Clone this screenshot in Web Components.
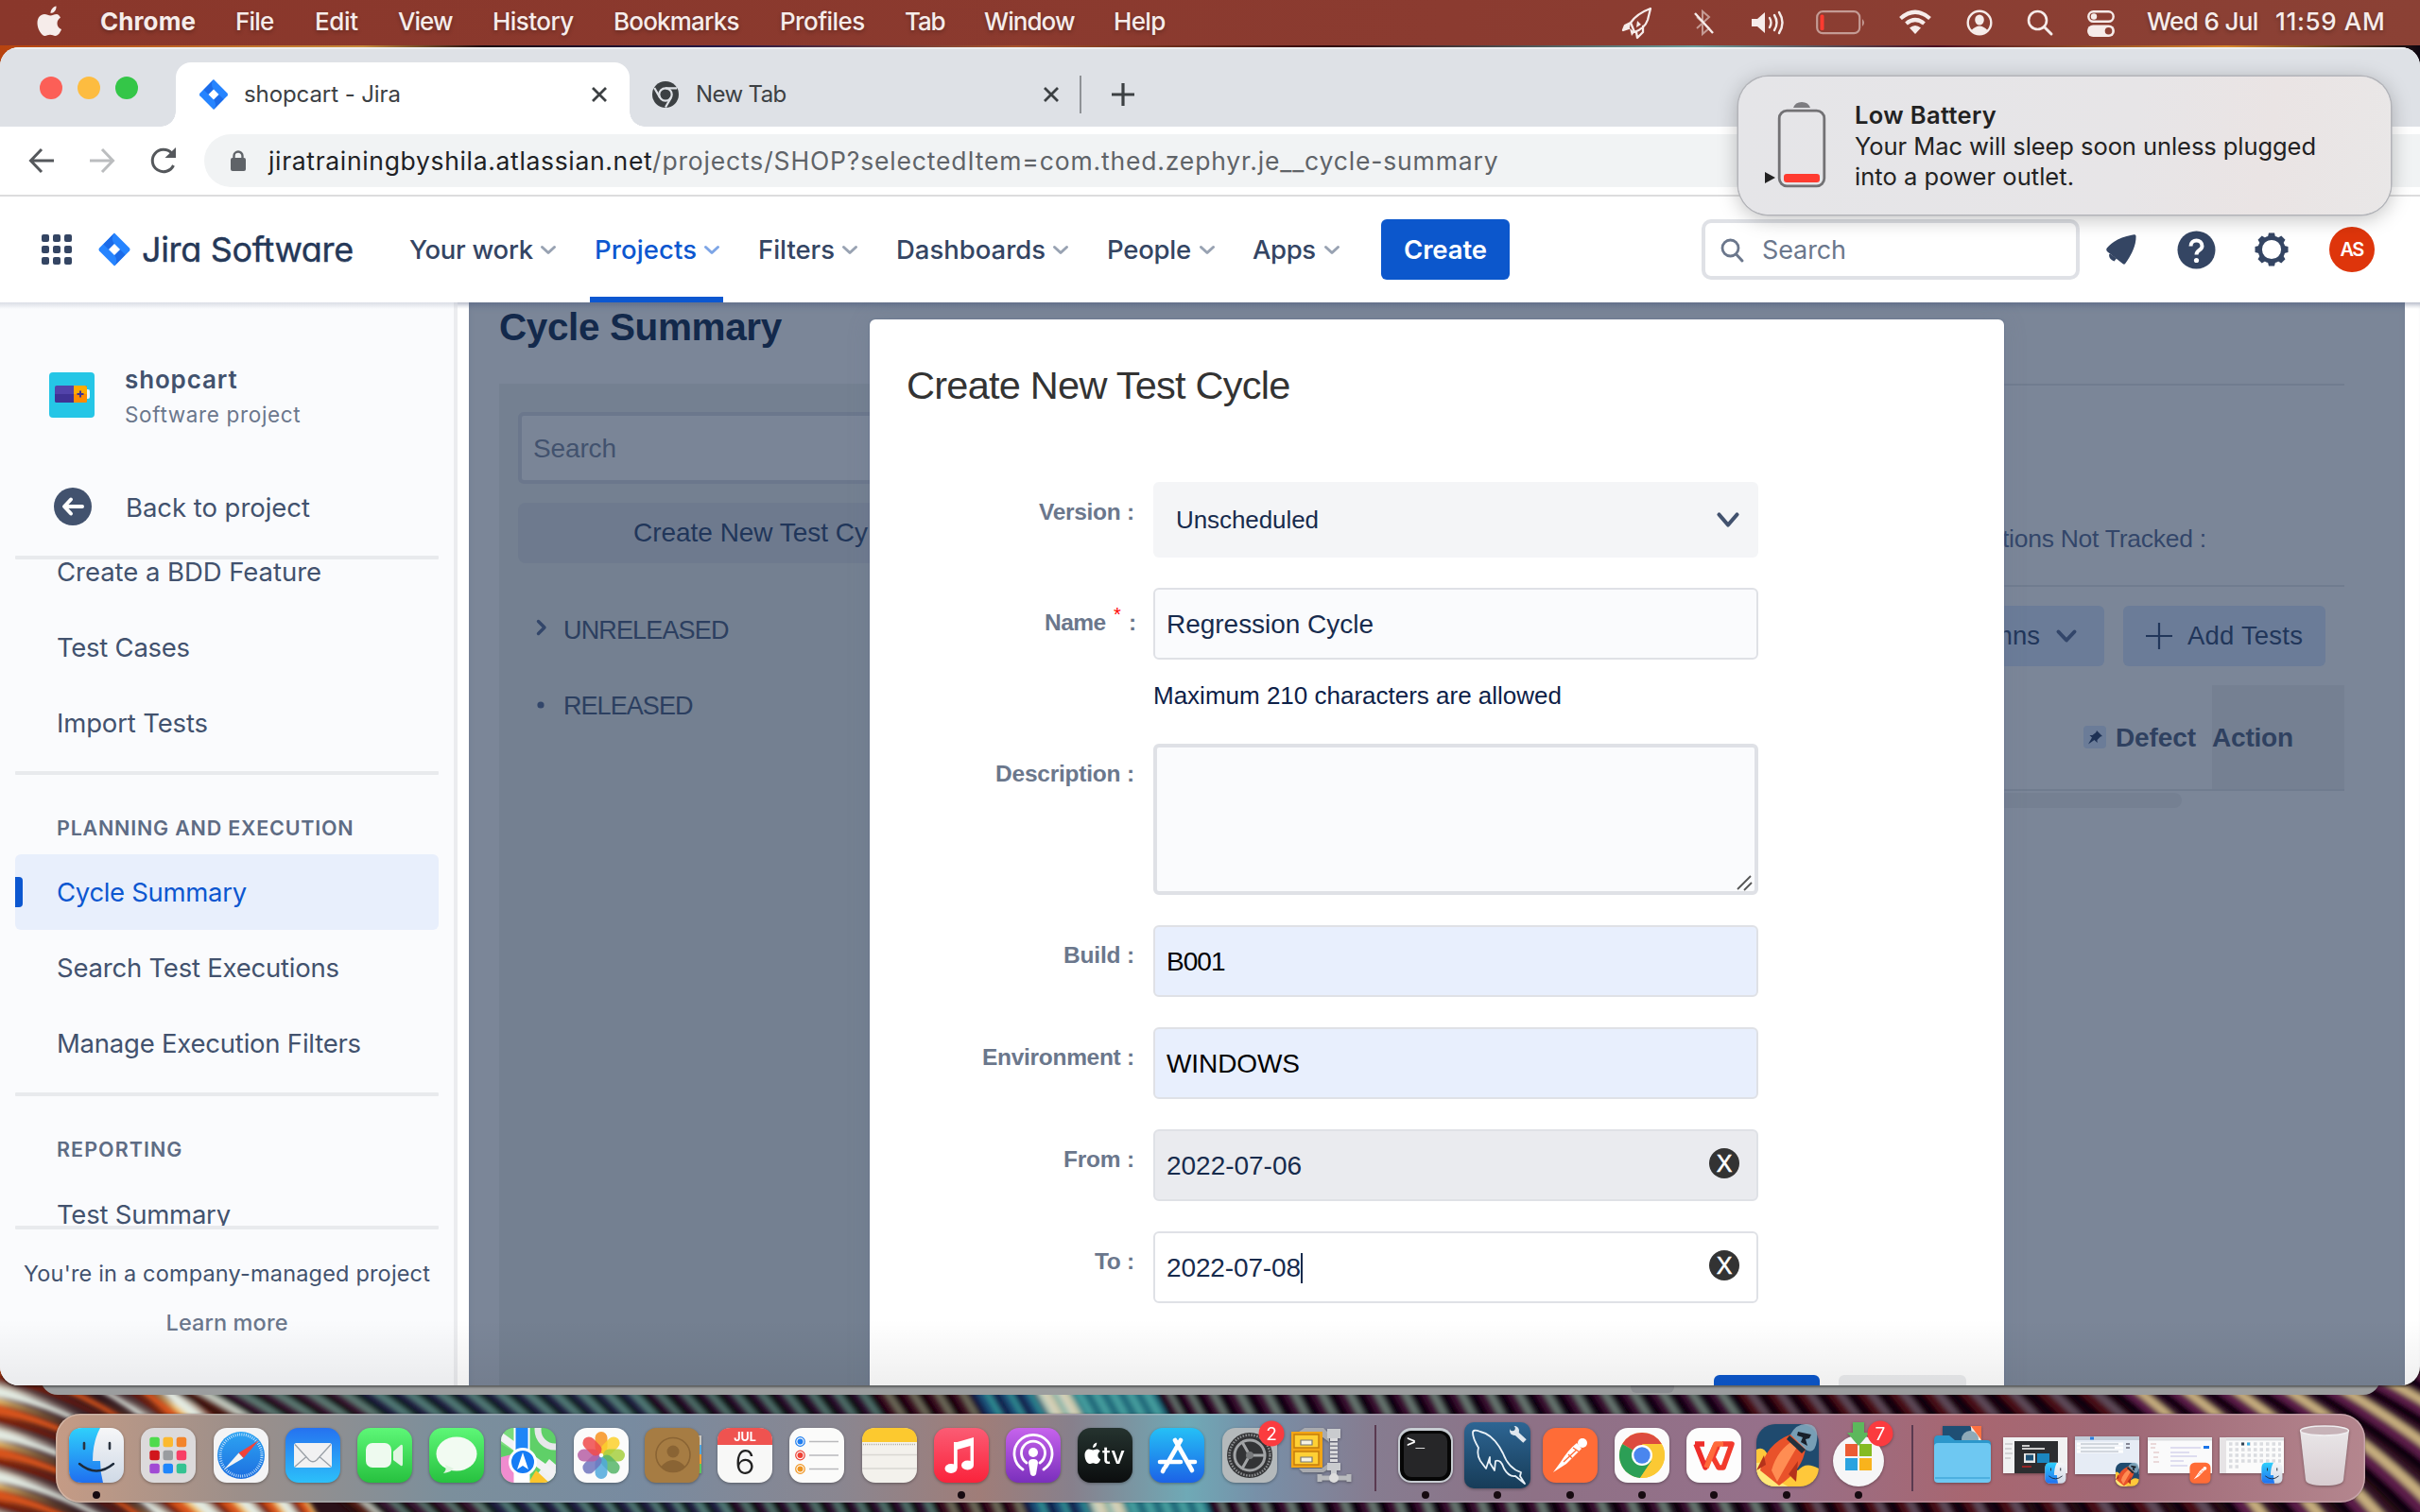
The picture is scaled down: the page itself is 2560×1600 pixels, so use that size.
<!DOCTYPE html>
<html lang="en">
<head>
<meta charset="utf-8">
<title>shopcart - Jira</title>
<style>
html,body{margin:0;width:2560px;height:1600px;overflow:hidden;background:#2a1420;font-family:Inter,"Liberation Sans",sans-serif;font-optical-sizing:none}
</style>
</head>
<body>
<mac-desktop></mac-desktop>
<script>
const fits=[];
const define=(name,css,html,after)=>customElements.define(name,class extends HTMLElement{
  constructor(){super();this.attachShadow({mode:'open'})}
  connectedCallback(){
    this.shadowRoot.innerHTML=`<style>*{box-sizing:border-box}svg{display:block;flex:none;overflow:visible}${css}</style>${typeof html==='function'?html(this):html}`;
    if(after)after(this);
  }
});

/* Text run that is tracked to a given width. */
customElements.define('fit-text',class extends HTMLElement{
  constructor(){super();this.attachShadow({mode:'open'}).innerHTML='<style>:host{display:block;white-space:pre;flex:none}span{display:inline-block}</style><span><slot></slot></span>';fits.push(this)}
  fit(){
    const w=+this.getAttribute('w'),s=this.shadowRoot.querySelector('span');
    const n=this.textContent.length;
    if(n>1)s.style.letterSpacing=((w-s.getBoundingClientRect().width)/(n-.5)).toFixed(3)+'px';
    this.style.width=w+'px';
  }
});
const T=(w,size,text,st='')=>`<fit-text w="${w}" style="font-size:${size}px;${st}">${text}</fit-text>`;
/* Lays items out in one flex line; each entry is [left, right, markup]. */
const line=(start,items)=>{let p=start;return items.map(([a,b,h])=>{const m=a-p;p=b;return `<div class="i" style="margin-left:${m}px;width:${b-a}px">${h}</div>`}).join('')};
const lineT=(a,b,size,text,st)=>[a,b,T(b-a,size,text,st)];
const S=(w,h,body,ex='')=>`<svg width="${w}" height="${h}" viewBox="0 0 ${w} ${h}" fill="none" ${ex}>${body}</svg>`;
const jiraMark=(w,h)=>`<svg width="${w}" height="${h}" viewBox="0 0 34 35"><path d="M17 0 33 16Q34 17.5 33 19L17 35 1 19Q0 17.5 1 16Z" fill="#2684ff"/><path d="M17 0Q12.500 6 17 11.500L11 17.500 5.500 12Z" fill="#1c6be8"/><path d="M17 35Q21.500 29 17 23.500L23 17.500 28.500 23Z" fill="#1c6be8"/><path d="M17 11.500 23 17.500 17 23.500 11 17.500Z" fill="#fff"/></svg>`;
const chev=(c,w=16,h=7,sw=3)=>S(w,h,`<path d="M1.500 0.500 ${w/2} ${h-.5} ${w-1.5} 0.500" stroke="${c}" stroke-width="${sw}" stroke-linecap="round" stroke-linejoin="round"/>`);

/* ---------- wallpaper ---------- */
define('desk-wallpaper',':host{display:block;width:2560px;height:1600px}',()=>{
  let out='';
  /* piecewise-linear lookup over x */
  const at=(pts,x)=>{for(let i=1;i<pts.length;i++)if(x<=pts[i][0]){const [a,u]=pts[i-1],[b,v]=pts[i];return u+(v-u)*Math.max(0,(x-a)/(b-a))}return pts[pts.length-1][1]};
  const period=[[100,42],[300,37],[600,28],[1000,27],[1100,18],[1200,18],[1280,29],[1900,31],[2200,46],[2500,64],[2600,66]];
  const slant=[[100,1.6],[300,1.25],[600,.85],[1000,.5],[1500,.45],[2000,.7],[2500,1.5]];
  const pal=x=>x<190?['#2b0f10','#5a2018','#c9cfc4','#93a096']
    :x<330?['#120a10','#3a1634','#5f7c74','#3f5a56']
    :x<640?['#0f1a1c','#221a44','#527c78','#3d625f']
    :x<880?['#0c070c','#2e1030','#50706a','#243634']
    :x<1000?['#140508','#3d0e20','#6d6a5a','#2a1a1c']
    :x<1080?['#101c48','#1f4f78','#2f8a90','#1a3560']
    :x<1115?['#a9c2b2','#d8d3bb','#c9c6a8','#6fa8a2']
    :x<1205?['#2b7f88','#4ba3a2','#2b8088','#1b4a6a']
    :x<1800?['#0e060c','#3a1032','#66766f','#1e1424']
    :x<2200?['#110308','#480c14','#5d4a58','#1c0510']
    :['#0e040a','#5b1f4a','#c6ae7e','#3a1530'];
  for(let y=1340;y<1660;y+=45){
    const b=(o,h,c)=>{const t=y+o;return `<path d="M-20 ${t}Q90 ${t+26} 190 ${t+105}T340 ${t+270}V${t+270+h*1.6}Q280 ${t+190+h*1.3} 190 ${t+105+h}T-20 ${t+h}Z" fill="${c}"/>`};
    out+=b(0,7,'#efc56a')+b(6,14,'#d9541a')+b(18,11,'#7c2411')+b(28,8,'#b9a898')+b(33,13,'#e3ebe2');
  }
  let x=150;
  while(x<2700){
    const w=at(period,x),d=150*at(slant,x),c=pal(x);
    let p=x;
    [.28,.3,.27,.15].forEach((f,k)=>{const q=w*f+1.5;
      out+=`<path d="M${p} 1455Q${p+d*.58} 1522 ${p+d} 1605h${q}Q${p+q+d*.58} 1522 ${p+q} 1455Z" fill="${c[k]}"/>`;p+=w*f});
    x+=w;
  }
  /* right-hand fan, above the dock's corner */
  return `<svg width="2560" height="1600"><defs><filter id="b" x="-5%" y="-5%" width="110%" height="110%"><feGaussianBlur stdDeviation="2.400"/></filter><linearGradient id="t"><stop offset="0" stop-color="#b8430f"/><stop offset=".15" stop-color="#c78a3a"/><stop offset=".2" stop-color="#1b0a10"/><stop offset=".3" stop-color="#241848"/><stop offset=".42" stop-color="#a8542c"/><stop offset=".55" stop-color="#30060a"/><stop offset=".7" stop-color="#6a9c9a"/><stop offset=".8" stop-color="#4a1022"/><stop offset=".92" stop-color="#d8862a"/><stop offset="1" stop-color="#0d0610"/></linearGradient></defs><rect width="2560" height="1600" fill="#2a1018"/><rect width="2560" height="90" fill="url(#t)"/><g filter="url(#b)">${out}</g></svg>`;
});

/* ---------- menu bar ---------- */
define('mac-menubar',`:host{display:flex;width:2560px;height:48px;background:linear-gradient(90deg,#8a372b,#8b3b30 60%,#8b4135);color:#f6ecea;align-items:center;text-shadow:0 2px 4px #0004}
.i{flex:none}.i svg{margin:auto}fit-text{margin-top:-3px}`,()=>line(0,[
 [38,68,S(30,34,'<path d="M22 9c-3 0-4.500 1.600-6.500 1.600S11.500 9 9 9C5 9 1.500 12.500 1.500 18.500S6 32 9.500 32c2 0 3-1.200 5.500-1.200S18.500 32 20.500 32c3 0 5.500-4 6.500-7-3-1.300-4.500-3.500-4.500-6.300 0-2.700 1.400-4.700 3.500-6C24.700 10.200 23.500 9 22 9ZM15.500 8c0-4 3-7 6-7.500C22 4.500 19 8 15.500 8Z" fill="#f6ecea"/>','style="margin-top:-3px"')],
 lineT(106,207,26,'Chrome','font-weight:700'),lineT(249,290,26,'File','font-weight:500'),lineT(333,379,26,'Edit','font-weight:500'),lineT(421,479,26,'View','font-weight:500'),lineT(521,607,26,'History','font-weight:500'),lineT(649,782,26,'Bookmarks','font-weight:500'),lineT(825,915,26,'Profiles','font-weight:500'),lineT(957,1000,26,'Tab','font-weight:500'),lineT(1041,1137,26,'Window','font-weight:500'),lineT(1178,1233,26,'Help','font-weight:500'),
 [1716,1748,S(32,32,'<path d="M30 1C22 4 13 10 9 16L13 26Q24 22 27 13ZM9 16 3 19 1 24 7 22M22 20l0 6-6 6-1-6" stroke="#f6ecea" stroke-width="2.300" stroke-linejoin="round" stroke-linecap="round"/><path d="M9 16 3 19 1 24 8 21ZM13 26 8 22 10 30Z" fill="#f6ecea"/><path d="M16 14 20 18 15 21Z" fill="#f6ecea"/>')],
 [1790,1814,S(24,28,'<path d="M5 8 18 20 11 26V2l7 6L5 20" stroke="#f6ecea88" stroke-width="2"/><path d="M3 4 22 25" stroke="#f6ecea" stroke-width="2.400"/>')],
 [1852,1890,S(38,28,'<path d="M1 10h6l8-7v22l-8-7H1Z" fill="#f6ecea"/><path d="M20 9q3 5 0 10M25 6q5 8 0 16M30 3q7 11 0 22" stroke="#f6ecea" stroke-width="2.400" stroke-linecap="round"/>')],
 [1921,1973,S(52,26,'<rect x="1.200" y="1.200" width="45" height="23" rx="6" stroke="#f6ecea88" stroke-width="2.200"/><path d="M49 9q4 4 0 8Z" fill="#f6ecea88"/><rect x="4.500" y="4.500" width="4" height="16.500" rx="1.500" fill="#ff3b30"/>')],
 [2008,2044,S(36,26,'<path d="M2.500 9.500Q18-4 33.500 9.500M8.500 15Q18 7 27.500 15" stroke="#f6ecea" stroke-width="4.200"/><path d="M12 19.500q6-5 12 0L18 26Z" fill="#f6ecea"/>','style="margin-top:-2px"')],
 [2080,2108,S(28,28,'<circle cx="14" cy="14" r="12.300" stroke="#f6ecea" stroke-width="2.400"/><ellipse cx="14" cy="11" rx="4.800" ry="5.500" fill="#f6ecea"/><path d="M5.500 22q8.500-9 17 0-8.500 8-17 0Z" fill="#f6ecea"/>')],
 [2144,2172,S(28,28,'<circle cx="11.500" cy="11.500" r="9.500" stroke="#f6ecea" stroke-width="2.600"/><path d="M18.500 18.500 26 26" stroke="#f6ecea" stroke-width="3" stroke-linecap="round"/>')],
 [2208,2237,S(29,28,'<rect x="1.300" y="1.300" width="26.400" height="10.500" rx="5.200" stroke="#f6ecea" stroke-width="2.400"/><circle cx="7" cy="6.500" r="3.200" fill="#f6ecea"/><rect y="15.500" width="29" height="12.500" rx="6.200" fill="#f6ecea"/><circle cx="22.500" cy="21.700" r="3.800" fill="#8b4034"/>','style="margin-top:1px"')],
 lineT(2271,2389,26,'Wed 6 Jul','font-weight:500'),lineT(2407,2523,26,'11:59 AM','font-weight:500')]));

/* ---------- tab strip ---------- */
const cross=(c='#3c4043')=>S(16,16,`<path d="M1 1 15 15M15 1 1 15" stroke="${c}" stroke-width="2.800"/>`);
define('browser-tabs',`:host{display:flex;height:84px;background:#dee1e6;color:#3c4043;font-weight:400;box-shadow:inset 0 2px #eef0f2}
.l{display:flex;gap:16px;padding:31px 0 0 42px;width:186px;flex:none}.l b{width:24px;height:24px;border-radius:50%;flex:none}
.a{position:relative;margin-top:16px;width:480px;height:68px;background:#fff;border-radius:16px 16px 0 0;display:flex;align-items:center;flex:none}
.a:before,.a:after{content:"";position:absolute;bottom:0;width:16px;height:16px;left:-16px;background:radial-gradient(circle at 0 0,#0000 15.500px,#fff 16px)}
.a:after{left:480px;background:radial-gradient(circle at 100% 0,#0000 15.500px,#fff 16px)}
.n{margin-top:16px;height:68px;display:flex;align-items:center}.i{flex:none}fit-text{margin-top:-2px}`,()=>`
<div class="l"><b style="background:#fc5f57"></b><b style="background:#fdbc40"></b><b style="background:#34c648"></b></div>
<div class="a">${line(186,[[210,242,jiraMark(32,32)],lineT(258,424,24,'shopcart - Jira'),[626,642,cross()]])}</div>
<div class="n">${line(666,[[690,718,S(28,28,'<circle cx="14" cy="14" r="14" fill="#3c4043"/><circle cx="14" cy="14" r="6.700" stroke="#dee1e6" stroke-width="2.200"/><path d="M14 7.300H26M8.200 17.400 2.200 7M19.800 17.400 14 27.500" stroke="#dee1e6" stroke-width="2.200"/>')],lineT(736,832,24,'New Tab'),[1104,1120,cross()],[1142,1144,'<div style="height:40px;background:#8f9296"></div>'],[1176,1200,S(24,24,'<path d="M12 0V24M0 12H24" stroke="#3c4043" stroke-width="3.200"/>')]])}</div>`);

define('browser-toolbar',`:host{display:flex;height:74px;background:#fff;border-bottom:2px solid #dcdcdd;align-items:center}
.i{flex:none}.p{display:flex;align-items:center;height:56px;margin-left:29px;flex:1;border-radius:28px 0 0 28px;background:#f1f3f4}`,()=>`
${line(0,[[30,58,S(28,28,'<path d="M27 14H3M14 2 2.500 14 14 26" stroke="#55585c" stroke-width="3"/>')],[94,122,S(28,28,'<path d="M1 14H25M14 2 25.500 14 14 26" stroke="#bbbdbf" stroke-width="3"/>')],[159,187,S(28,28,'<path d="M24.500 19A11.700 11.700 0 1 1 22.500 6" stroke="#55585c" stroke-width="3"/><path d="M27 0V11H15.500Z" fill="#55585c"/>')]])}
<div class="p">${line(216,[[244,260,S(16,22,'<rect y="8" width="16" height="14" rx="2" fill="#5f6368"/><path d="M3.500 9V6a4.500 4.500 0 0 1 9 0V9" stroke="#5f6368" stroke-width="2.400"/>')],lineT(284,690,26.5,'jiratrainingbyshila.atlassian.net','color:#202124'),lineT(690,1585,26.5,'/projects/SHOP?selectedItem=com.thed.zephyr.je__cycle-summary','color:#5f6368')])}</div>`);

/* ---------- Jira navigation ---------- */
const nc='#344563',cc='#98a2b2';
define('jira-nav',`:host{display:flex;height:112px;background:#fff;align-items:center;color:${nc};font-weight:500;position:relative;z-index:2}
.i{flex:none}.on{height:112px;display:flex;align-items:center;padding-left:5px;border-bottom:6px solid #0c57d0;padding-top:6px;gap:8px;color:#0c57d0}
.c{height:64px;border-radius:6px;background:#0c57cc;color:#fff;display:flex;align-items:center;justify-content:center}
.s{height:64px;border:4px solid #dfe1e6;border-radius:10px;display:flex;align-items:center;padding-left:16px;gap:20px;color:#6b778c;font-weight:400}
.av{height:48px;border-radius:50%;background:#de350b;color:#fff;display:flex;align-items:center;justify-content:center}`,()=>line(0,[
 [44,76,S(32,32,[0,12,24].map(y=>[0,12,24].map(x=>`<rect x="${x}" y="${y}" width="8" height="8" rx="2" fill="${nc}"/>`).join('')).join(''))],
 [104,138,jiraMark(34,36)],lineT(150,374,36,'Jira Software','font-weight:400;color:#253858;-webkit-text-stroke:.4px #253858;font-feature-settings:\'cv11\' 1,\'ss01\' 0;margin-top:-1px'),
 lineT(433,564,27.5,'Your work'),[572,588,chev(cc)],
 [624,765,`<div class="on">${T(108,27.5,'Projects')}${chev('#7da5e6')}</div>`],
 lineT(802,883,27.5,'Filters'),[891,907,chev(cc)],lineT(948,1106,27.5,'Dashboards'),[1114,1130,chev(cc)],lineT(1171,1260,27.5,'People'),[1269,1285,chev(cc)],lineT(1325,1392,27.5,'Apps'),[1401,1417,chev(cc)],
 [1461,1597,`<div class="c">${T(88,27.5,'Create','font-weight:600')}</div>`],
 [1800,2200,`<div class="s">${S(24,25,'<circle cx="10.500" cy="10.500" r="8.500" stroke="#6b778c" stroke-width="2.800"/><path d="M17 17.500 23 24" stroke="#6b778c" stroke-width="3" stroke-linecap="round"/>')}${T(89,27,'Search')}</div>`],
 [2228,2261,S(33,32,`<path d="M31.500 1.500C31 0 29 0 27 .8 16 3 7 7 .8 14.500-.2 16 .2 17.500 1.500 18.500L17.500 31q2 1.500 3-.5C26 23 32 12 31.500 1.500Z" fill="${nc}"/><path d="M3 21.500q0 5 5.500 7l2.500-3-7-5Z" fill="${nc}"/>`)],
 [2303,2344,S(41,41,`<circle cx="20.500" cy="20.500" r="20" fill="${nc}"/><path d="M14.500 16.500c0-8 12-8 12 0 0 4.500-6 4-6 9" stroke="#fff" stroke-width="4"/><circle cx="20.500" cy="31.500" r="2.600" fill="#fff"/>`)],
 [2385,2421,S(36,36,`<circle cx="18" cy="18" r="12.300" stroke="${nc}" stroke-width="4.400"/>${[0,45,90,135,180,225,270,315].map(a=>`<path d="M13.800 5.500 15 .5h6l1.200 5Z" fill="${nc}" transform="rotate(${a} 18 18)"/>`).join('')}`)],
 [2464,2512,`<div class="av">${T(25,20,'AS','font-weight:600')}</div>`]]));

/* ---------- sidebar ---------- */
define('side-item',':host{display:flex;align-items:center;height:80px;padding:0 0 0 44px;font-size:27.5px;color:#42526e;flex:none}:host([on]){background:#e8effc;color:#0c57d0;border-radius:6px;position:relative}:host([on]):before{content:"";position:absolute;left:0;top:24px;width:8px;height:32px;background:#0c57d0;border-radius:0 4px 4px 0}','<slot></slot>');
const item=(w,t,on='')=>`<side-item ${on}>${T(w,27.5,t)}</side-item>`;
define('jira-sidebar',`:host{display:flex;flex-direction:column;width:484px;flex:none;background:#fafbfd;border-right:4px solid #ebecef;padding:0 16px;color:#42526e;height:1146px}
hr{border:0;height:4px;background:#e8eaed;margin:0;width:448px;flex:none;border-radius:1px}
.p{display:flex;align-items:center;gap:32px;padding:74px 0 0 36px}.p+.p{padding:70px 0 0 41px;gap:36px}
.t{display:flex;flex-direction:column;gap:12px}.m{height:705px;overflow:hidden;flex:none;width:448px;display:flex;flex-direction:column}
.h{display:flex;align-items:center;padding-left:44px;font-weight:600;color:#5e6c84;flex:none}
.f{display:flex;flex-direction:column;align-items:center;width:448px}`,()=>`
<div class="p" style="height:122px">${S(48,48,'<rect width="48" height="48" rx="4" fill="#25c6e6"/><rect x="38" y="18" width="5" height="10" rx="2" fill="#e8f7fb"/><rect x="6" y="14" width="34" height="18" rx="2" fill="#5243aa"/><path d="M6 23H26V32H8Q6 32 6 30Z" fill="#403294"/><path d="M26 14H38q2 0 2 2V30q0 2-2 2H26Z" fill="#ffab00"/><path d="M26 23H40v7q0 2-2 2H26Z" fill="#ff8b00"/><path d="M33 19.500v7M29.500 23h7" stroke="#403294" stroke-width="2"/>')}
<div class="t" style="padding-top:2px">${T(119,26,'shopcart','font-weight:600;line-height:26px')}${T(186,22.5,'Software project','color:#6b778c;line-height:23px')}</div></div>
<div class="p" style="height:118px;padding-top:72px">${S(40,40,'<circle cx="20" cy="20" r="20" fill="#42526e"/><path d="M30 20H12M18 12.500 11 20 18 27.500" stroke="#fff" stroke-width="4" stroke-linecap="round" stroke-linejoin="round"/>','style="margin-top:-2px"')}${T(195,27.5,'Back to project','margin-top:-1px')}</div>
<hr style="margin-top:28px">
<div class="m"><div style="margin-top:-27px"></div>${item(280,'Create a BDD Feature')}${item(141,'Test Cases')}${item(160,'Import Tests')}
<hr style="margin-top:11px"><div class="h" style="height:84px;padding-top:27px">${T(314,21.5,'PLANNING AND EXECUTION')}</div>
${item(201,'Cycle Summary','on')}${item(299,'Search Test Executions')}${item(322,'Manage Execution Filters')}
<hr style="margin-top:12px"><div class="h" style="height:85px;padding-top:27px">${T(133,21.5,'REPORTING')}</div>${item(184,'Test Summary')}</div>
<hr><div class="f">${T(430,23.5,"You're in a company-managed project",'margin-top:33px;line-height:28px')}${T(129,23.5,'Learn more','margin-top:24px;line-height:28px;color:#6b778c;font-weight:500')}</div>`);

/* ---------- page behind the blanket ---------- */
define('cycle-page',`:host{display:flex;flex-direction:column;width:2048px;flex:none;background:#7b8698;height:1146px;padding-left:32px;font-family:"Liberation Sans",Arial,sans-serif;color:#2c3f60;box-shadow:inset 0 6px 8px -4px #5f6d88}
.r{display:flex}.L{width:460px;height:1060px;background:#748091;padding:30px 20px;flex:none}
.sb{height:76px;width:500px;border:4px solid #6b778c;border-radius:6px;background:#7a8597;display:flex;align-items:center;padding:1px 0 0 12px;color:#42526e}
.cb{height:64px;width:500px;margin-top:20px;border-radius:8px;background:#6e7a8e;display:flex;align-items:center;padding-left:122px;color:#21365a}
.n{display:flex;align-items:center;height:80px}.R{width:1492px;border-top:2px solid #707c8f;display:flex;flex-direction:column;align-items:flex-end}
.b{display:flex;align-items:center;height:64px;background:#6b7c98;border-radius:6px;color:#21365a}
.x{height:213px;width:100%;border-bottom:2px solid #707c8f;display:flex;justify-content:flex-end;padding:149px 146px 0 0}
.h{display:flex;width:100%;justify-content:flex-end;height:112px;margin-top:20px;border-bottom:2px solid #707c8f;align-items:center;font-weight:700;color:#2f4160}
.ac{width:140px;height:110px;background:#758092;display:flex;align-items:center;margin-left:17px}`,()=>`
<div style="height:86px;padding-top:0">${T(299,40.5,'Cycle Summary','font-weight:700;color:#13294b;line-height:52px')}</div>
<div class="r"><div class="L"><div class="sb">${T(88,28,'Search')}</div><div class="cb">${T(248,28,'Create New Test Cy')}</div>
<div class="n" style="margin-top:31px;padding-left:20px;gap:18px">${S(10,16,'<path d="M1.500 1.500 8 8 1.500 14.500" stroke="#33466a" stroke-width="3.400" stroke-linecap="round" stroke-linejoin="round"/>','style="margin-top:-7px"')}${T(175,27,'UNRELEASED')}</div>
<div class="n" style="padding-left:20px;gap:18px">${S(10,8,'<circle cx="4" cy="3" r="3.600" fill="#33466a"/>')}${T(137,27,'RELEASED')}</div></div>
<div class="R"><div class="x">${T(216,26.5,'tions Not Tracked :','line-height:26px;color:#33466a')}</div>
<div class="r" style="margin-top:20px;gap:20px;padding-right:20px"><div class="b" style="padding:0 30px 0 20px;gap:18px">${T(52,27.5,'mns')}${chev('#33466a',20,10,4)}</div>
<div class="b" style="width:214px;padding-left:24px;gap:16px">${S(28,28,'<path d="M14 0V28M0 14H28" stroke="#21365a" stroke-width="2.200"/>')}${T(122,27.5,'Add Tests')}</div></div>
<div class="h">${S(24,24,'<rect width="24" height="24" rx="4" fill="#6b7c98"/><path d="m14 5 6 6-2 .6-3.500 3.500.2 3L11.500 15 5 19.500 9 12.500 6.500 10l3 0L13.300 7Z" fill="#1d3155"/>')}${T(85,28,'Defect','margin-left:10px;padding-top:1px')}<div class="ac">${T(86,28,'Action','padding-top:1px')}</div></div>
<div style="width:300px;height:16px;border-radius:8px;background:#758092;margin:2px 172px 0 0"></div></div></div>`);

/* ---------- dialog ---------- */
define('form-row',`:host{display:grid;grid-template-columns:280px 640px;column-gap:20px;flex:none}
.l{display:flex;justify-content:flex-end;font-weight:700;color:#6b778c;line-height:24px;gap:7px}.f{border:2px solid #dfe1e6;border-radius:6px;display:flex;align-items:center;padding:1px 18px 0 12px;justify-content:space-between;color:#172b4d}`,
 e=>{const g=k=>e.getAttribute(k);return `<div class="l" style="padding-top:${g('pt')}px"><slot name="label"></slot></div><div class="f" style="height:${g('h')}px;background:${g('bg')};${g('css')||''}"><slot></slot></div>`});
const row=(pt,h,bg,lab,body,css='',mt=32)=>`<form-row pt="${pt}" h="${h}" bg="${bg}" css="${css}" style="margin-top:${mt}px"><div slot="label" style="display:flex">${lab}</div>${body}</form-row>`;
const clear=`<svg width="32" height="32" viewBox="0 0 32 32" style="display:block;margin-top:-5px"><circle cx="16" cy="16" r="16" fill="#333"/><text x="16" y="24.500" text-anchor="middle" font-family="Liberation Sans" font-size="25" fill="#fff" stroke="#fff" stroke-width=".5">X</text></svg>`;
define('cycle-dialog',`:host{display:flex;flex-direction:column;width:1200px;height:1150px;background:#fff;border-radius:6px 6px 0 0;font-family:"Liberation Sans",Arial,sans-serif;color:#172b4d;box-shadow:0 0 2px #5d6c88,0 0 24px #5d6c8833}`,()=>`
${T(406,41.5,'Create New Test Cycle','color:#333;line-height:48px;margin:46px 0 78px 39px')}
${row(20,80,'#f4f5f7',T(101,24.5,'Version :'),T(151,26,'Unscheduled')+chev('#42526e',22,12,4.2),'border:0;padding:0 21px 0 24px',0)}
${row(25,76,'#fafbfd',T(65,24.5,'Name')+T(7,20,'*','color:#f00;margin:-9px 9px 0 8px;font-weight:400')+T(6,24.5,':'),T(219,28,'Regression Cycle'))}
${T(432,26,'Maximum 210 characters are allowed','color:#0d2148;margin:22px 0 0 300px;line-height:32px')}
${row(20,160,'#fafbfd',T(147,24.5,'Description :'),'<svg width="18" height="18" viewBox="0 0 18 18" style="display:block;margin-left:auto"><path d="M2 16 16 2M9 17 17 9" stroke="#555" stroke-width="1.800"/></svg>','border-width:4px;padding:0 2px 0 0;align-items:flex-end',35)}
${row(20,76,'#e8effd',T(75,24.5,'Build :'),T(62,28,'B001','color:#000'))}
${row(20,76,'#e8effd',T(161,24.5,'Environment :'),T(141,28,'WINDOWS','color:#000'))}
${row(20,76,'#eaebef',T(75,24.5,'From :'),T(143,28,'2022-07-06')+clear)}
${row(20,76,'#fff',T(42,24.5,'To :'),`<div style="display:flex;align-items:center">${T(142,28,'2022-07-08')}<div style="width:2px;height:32px;background:#172b4d"></div></div>`+clear)}
<div style="display:flex;gap:20px;margin:76px 0 0 893px"><div style="width:112px;height:64px;border-radius:6px;background:#0c57cc"></div><div style="width:135px;height:64px;border-radius:6px;background:#ecedef"></div></div>`);

/* ---------- window ---------- */
define('browser-window',`:host{display:flex;flex-direction:column;width:2560px;height:1416px;border-radius:20px;overflow:hidden;background:#fff;position:relative;isolation:isolate;box-shadow:0 2px 2px #0006}
.m{display:flex;height:1146px;gap:12px;box-shadow:inset 0 5px 5px -3px #c9ccd6}cycle-dialog{position:absolute;left:920px;top:288px}
.sh{position:absolute;left:0;right:0;bottom:0;height:70px;background:linear-gradient(#0000,#00000010)}
.e{position:absolute;left:0;right:0;top:270px;height:7px;background:linear-gradient(#5a678833,#0000)}`,`
<browser-tabs></browser-tabs><browser-toolbar></browser-toolbar><jira-nav></jira-nav><div class="m"><jira-sidebar></jira-sidebar><cycle-page></cycle-page></div><div class="e"></div><cycle-dialog></cycle-dialog><div class="sh"></div>`);

/* ---------- notification ---------- */
define('mac-notification',`:host{display:flex;width:690px;height:146px;border-radius:32px;background:linear-gradient(100deg,#e5e5e8,#e7e5e7 60%,#eae4e4 80%,#e9e7e7);box-shadow:0 0 0 1.500px #b3b4b9,0 4px 22px #0004;color:#222;padding:27px 0 0 28px}
.t{display:flex;flex-direction:column;margin:-2px 0 0 31px}`,()=>`${S(64,90,'<path d="M30 6Q32 0 39 0T48 6Z" fill="#7d7c80"/><rect x="15.200" y="9.200" width="47.600" height="79.600" rx="8" stroke="#727174" stroke-width="2.800"/><rect x="20" y="76" width="38" height="9" rx="3" fill="#ff3b30"/><path d="M0 74 11 80 0 86Z" fill="#222"/>')}
<div class="t">${T(150,25.5,'Low Battery','font-weight:600;line-height:32.500px')}${T(488,25.5,'Your Mac will sleep soon unless plugged','line-height:32.500px')}${T(232,25.5,'into a power outlet.','line-height:32.500px')}</div>`);

/* ---------- dock ---------- */
const lg=(id,a,b,v=1)=>`<linearGradient id="${id}" x2="0" y2="${v}"><stop stop-color="${a}"/><stop offset="1" stop-color="${b}"/></linearGradient>`;
const sq=f=>`<rect x="9" y="15" width="58" height="58" rx="14" fill="${f}"/>`;
const badge=n=>`<circle cx="61" cy="21" r="13.500" fill="#fb3b3f"/><text x="61" y="28" font-size="19" fill="#fff" text-anchor="middle">${n}</text>`;
const finder='<rect x="9" y="15" width="58" height="58" rx="14" fill="url(#fr)"/><path d="M42 15H23Q9 15 9 29V59Q9 73 23 73H45Q42 62 42 50H34Q34 30 42 15Z" fill="url(#fl)"/><path d="M25 31v6M52 31v6" stroke="#2a3340" stroke-width="2.600" stroke-linecap="round"/><path d="M20 53Q38 68 56 53" stroke="#1d2a3a" stroke-width="2.400" stroke-linecap="round"/>';
const postman='<rect x="9" y="15" width="58" height="58" rx="14" fill="#ff6c37"/><circle cx="51" cy="31" r="5" fill="#fff"/><path d="M50 37 34 53 20 62 28 51Q36 38 45 31Z" fill="#fff"/><path d="M45 38 31 51M41 36 47 40M36 43 40 47" stroke="#ff6c37" stroke-width="1.400"/>';
const rocket='<clipPath id="rk"><rect x="6" y="11" width="66" height="66" rx="20"/></clipPath><g clip-path="url(#rk)"><rect x="6" y="11" width="66" height="66" fill="#1f4a6e"/><path d="M6 38Q14 34 18 44L30 56 50 60Q58 50 72 58V80H6Z" fill="#ffc83a"/><path d="M6 52Q18 50 24 62T42 78H6Z" fill="#ffe77a"/><path d="M10 60Q16 32 42 22L58 36Q56 58 30 76Z" fill="#e9522a"/><path d="M22 60Q28 38 46 28L51 32Q40 50 28 72Z" fill="#ff8d53"/><path d="M14 44 6 60 16 54ZM50 50 48 72 40 64Z" fill="#b5321b"/></g><path d="M42 22Q48 10 60 11T70 28 58 38Z" fill="#8db3c7cc"/><path d="M41 23 58 38 54 42 38 27Z" fill="#22303c"/><path d="M50 19 64 22 62 26 58 27 60 34 53 30 55 25 49 23Z" fill="#18202a"/>';
const tint=(x,y,c)=>`<rect x="${x}" y="${y}" width="10.500" height="10.500" rx="2.500" fill="${c}"/>`;
const petals=['#f7921e','#fbd02b','#a6cf3f','#56b568','#4fa8dc','#6e74bd','#b65fa5','#ef4a4a'];
const A={
finder,
launch:sq('#dcdadb')+[['#4edb4c','#fbb92f','#f3842a'],['#d1161c','#9a9c9f','#f83e66'],['#a14bd4','#1f86fb','#35c392']].map((r,j)=>r.map((c,i)=>tint(18.300+i*14.2,24.700+j*14,c)).join('')).join(''),
safari:sq('#f4f4f5')+'<circle cx="38" cy="44" r="25" fill="url(#sf)"/><circle cx="38" cy="44" r="22" stroke="#d5ecff" stroke-width="3" stroke-dasharray=".8 1.500"/><path d="M57 28 40.500 47 35.500 41.500Z" fill="#f0433a"/><path d="M20 59 35.500 41.500 40.500 47Z" fill="#f4f4f4"/>',
mail:sq('url(#ml)')+'<rect x="18" y="31" width="40" height="26" rx="2.500" fill="#f1f1f2"/><path d="M19 32.500 34 49Q38 52.500 42 49L57 32.500M19 56 31 45.500M57 56 45 45.500" stroke="#9aa0a7" stroke-width="1.300"/>',
face:sq('url(#gr)')+'<rect x="18" y="31" width="27" height="26" rx="7" fill="#eefaef"/><path d="M47 40 55 33Q57 32 57 35V53Q57 56 55 55L47 49Z" fill="#dff5e1"/>',
msg:sq('url(#gr)')+'<ellipse cx="38" cy="42.500" rx="21.500" ry="18" fill="#f2fbf2"/><path d="M26 54Q28 59 24 63 32 62 35 58Z" fill="#dff5e0"/>',
maps:'<clipPath id="mp"><rect x="9" y="15" width="58" height="58" rx="14"/></clipPath><g clip-path="url(#mp)"><rect x="9" y="15" width="58" height="58" fill="#5fd068"/><path d="M9 15H30V44L9 32Z" fill="#7adc7c"/><path d="M9 46 24 42V73H9Z" fill="#f08ccf"/><path d="M40 73 60 48 67 54V73Z" fill="#f0f0f2"/><path d="M38 73 46 60 60 73Z" fill="#fbc52d"/><path d="M9 24 67 66" stroke="#f2f2f4" stroke-width="8"/><circle cx="66" cy="17" r="18" stroke="#e7e7ea" stroke-width="7"/><path d="M31 15V73" stroke="#fff" stroke-width="17"/><path d="M31 15V50" stroke="#1e86f7" stroke-width="13"/></g><circle cx="32" cy="51" r="13.500" fill="#167cf5" stroke="#fff" stroke-width="3"/><path d="M32 41 38 59 32 55 26 59Z" fill="#fff"/>',
photos:sq('#fbfbfb')+petals.map((c,i)=>`<rect x="31.500" y="19" width="13" height="23" rx="6.500" fill="${c}" opacity=".85" transform="rotate(${i*45} 38 44)"/>`).join(''),
contacts:'<path d="M60 23h8v10h-8Z" fill="#c9c5bd"/><path d="M60 33h8v10h-8Z" fill="#4fa6e0"/><path d="M60 43h8v10h-8Z" fill="#f49a2c"/><path d="M60 53h8v10h-8Z" fill="#5bc65a"/><rect x="8" y="15" width="58" height="58" rx="12" fill="#a67c43"/><circle cx="38" cy="43.500" r="18" stroke="#8a6434" stroke-width="1.600"/><circle cx="38" cy="40" r="6.500" fill="#8a6434"/><path d="M25 56Q38 42 51 56 38 68 25 56Z" fill="#8a6434"/>',
cal:sq('#f8f8f7')+'<path d="M9 33V29Q9 15 23 15H53Q67 15 67 29V33Z" fill="#ef5350"/><text x="38" y="29" font-size="12.500" font-weight="700" fill="#fff" text-anchor="middle">JUL</text><text x="38" y="64" font-size="36" font-weight="300" fill="#222" text-anchor="middle">6</text>',
rem:sq('#fbfbfa')+['#1e7df0','#ee4136','#f0941f'].map((c,i)=>`<circle cx="20.500" cy="${29.500+i*14.500}" r="3" fill="${c}"/><circle cx="20.500" cy="${29.500+i*14.500}" r="4.800" stroke="${c}" stroke-width="1.200"/><path d="M30 ${29.500+i*14.500}H61" stroke="#b9b9bc" stroke-width="1.500"/>`).join(''),
notes:sq('#f3f1ec')+'<path d="M9 30V29Q9 15 23 15H53Q67 15 67 29V30Z" fill="#fcc92f"/><path d="M10 32.500H66" stroke="#b3b1aa" stroke-width="1.500" stroke-dasharray="1 1"/><path d="M9 43.500H67M9 58H67" stroke="#d9d7d2" stroke-width="1.500"/>',
music:sq('url(#mu)')+'<path d="M30 31 51 25V33L33.500 38V57H30Z" fill="#fff"/><path d="M30 30H33.500V58H30ZM47.500 28H51V54H47.500Z" fill="#fff"/><ellipse cx="27" cy="58" rx="6.500" ry="5" fill="#fff"/><ellipse cx="44.500" cy="54.500" rx="6.500" ry="5" fill="#fff"/>',
pod:sq('url(#pd)')+'<path d="M27 59A20 20 0 1 1 49 59M31 52A12.500 12.500 0 1 1 45 52" stroke="#fff" stroke-width="2.800" stroke-linecap="round"/><circle cx="38" cy="41" r="5" fill="#fff"/><path d="M33 52Q33 48 38 48T43 52L41 64Q40 66 38 66T35 64Z" fill="#fff"/>',
tv:sq('url(#tv)')+'<path d="M29.500 37.500c-2 0-3 1-4.300 1s-2.500-1-4.200-1c-2.500 0-4.500 2.500-4.500 6.500 0 5 3 9 5 9 1.500 0 2-.8 3.800-.8s2.200.8 3.700.8c2 0 3.500-2.500 4.200-4.700-3.600-1.500-3.800-6.500-.4-8.500-.8-1.300-2-2.300-3.300-2.300ZM25 36c0-3 1.800-5 4.200-5.500C29.500 33.500 27.800 35.800 25 36Z" fill="#fff"/><text x="35" y="52.500" font-size="25" font-weight="500" fill="#fff" textLength="24" lengthAdjust="spacingAndGlyphs">tv</text>',
app:sq('url(#as)')+'<path d="M42 28 26 56M36 28 54 60M20 51H42M50 51H57M24.500 58 23 61" stroke="#fff" stroke-width="4.600" stroke-linecap="round"/>',
set:sq('#b4b9bb')+'<circle cx="38" cy="44" r="24" fill="#333436"/><circle cx="38" cy="44" r="21.500" stroke="#8d8f91" stroke-width="2.500" stroke-dasharray="1.600 1.400"/><circle cx="38" cy="44" r="16" stroke="#a2a4a6" stroke-width="3"/><path d="M38 44 55 44M38 44 29.500 29M38 44 29.500 59" stroke="#a2a4a6" stroke-width="3"/><circle cx="38" cy="44" r="4" fill="#77797b"/>'+badge(2),
zip:'<path d="M14 19 20 15H40L46 21V30L38 24H14ZM14 58H38L46 52V58L40 62H18Z" fill="#a9abaf"/><rect x="6" y="19" width="33" height="38" fill="#f2a516"/><rect x="9" y="22" width="26" height="14" fill="#ffd034" stroke="#c57d0c" stroke-width="1.500"/><rect x="9" y="40" width="26" height="14" fill="#ffd034" stroke="#c57d0c" stroke-width="1.500"/><path d="M16 28H28V33H16ZM16 46H28V51H16Z" fill="#f7f3e2" stroke="#777" stroke-width="1.200"/><path d="M51 26V54" stroke="#dcdcde" stroke-width="8" stroke-dasharray="3 1.400"/><path d="M44 16H58V26H44ZM44 52H58V60H44ZM48 60H54V66H48Z" fill="#c9cbce"/><path d="M38 68H66M36 64V72M67 64V72" stroke="#b9bbbe" stroke-width="5"/><circle cx="51" cy="68" r="5" fill="#ddd"/>',
term:'<rect x="9" y="15" width="58" height="58" rx="14" fill="#c7ccd2"/><rect x="11" y="18" width="54" height="53" rx="12" fill="#060606"/><rect x="15" y="21" width="46" height="46" rx="8" fill="#262628"/><text x="18" y="35" font-size="16" font-family="Liberation Mono" font-weight="700" fill="#fff">&gt;_</text>',
mysql:'<rect x="3" y="9" width="70" height="70" rx="10" fill="url(#my)"/><path d="M12 20Q12 16 20 19 34 22 44 42 50 58 63 62L62 66 67 74 57 66Q50 67 45 58 42 48 36 50L35 60 30 52 30 46 26 58 20 50Q16 44 18 36 12 26 12 20Z" stroke="#e9f2f8" stroke-width="1.800" stroke-linejoin="round"/><path d="M54 17 67 29" stroke="#dfe7ee" stroke-width="5"/><circle cx="56" cy="18" r="5" fill="#dfe7ee"/><circle cx="54" cy="15.500" r="2.800" fill="#2b5d84"/>',
postman,
chrome:sq('#fbfbfb')+'<circle cx="38" cy="44" r="24" fill="#fbc934"/><path d="M38 44 17.200 32A24 24 0 0 1 58.800 32Z" fill="#dd4b3e"/><path d="M17.200 32A24 24 0 0 0 36 68L48 50 38 44Z" fill="#2c9f56"/><path d="M58.800 32H38L48 50 36 68A24 24 0 0 0 58.800 32Z" fill="#fbc934"/><circle cx="38" cy="44" r="11" fill="#fff"/><circle cx="38" cy="44" r="8.700" fill="#4a86ee"/>',
wps:sq('#fdfdfd')+'<path d="M18 32H28M19 32 29 57 39 35H44" stroke="#ee2d2a" stroke-width="5.500" stroke-linejoin="round"/><path d="M43 32 37 46 43 57H48L57 32H47" stroke="#f23a2c" stroke-width="5.500" stroke-linejoin="round"/><path d="M30 57 40 32H48" stroke="#ff6a3a" stroke-width="5.500" stroke-linejoin="round"/>',
rocket,
ms:'<ellipse cx="38" cy="50" rx="27" ry="27" fill="#f6f6f7"/><path d="M24 32H37V45H24Z" fill="#ec5c34"/><path d="M39 32H52V45H39Z" fill="#85bb22"/><path d="M24 47H37V60H24Z" fill="#2ba3e0"/><path d="M39 47H52V60H39Z" fill="#f9b31c"/><path d="M32 9H44V20H50L38 34 26 20H32Z" fill="#5cb85c"/>'+badge(7),
folder:'<path d="M17 13H58V40H17Z" fill="#1f4f74"/><path d="M46 13H58V30Z" fill="#ff7040"/><path d="M47 13 58 28H48Z" fill="#f4f0ec"/><circle cx="46" cy="27" r="9" fill="#8ea9b8"/><path d="M8 28Q8 23 12 23H24L30 28H64Q68 28 68 32V45H8Z" fill="#2c97cb"/><rect x="8" y="31" width="60" height="42" rx="4" fill="#6ec8f2"/><path d="M9 68H67" stroke="#4db0e0" stroke-width="2"/>',
t1:'<rect x="4" y="25" width="68" height="38" fill="#f1f1f2"/><rect x="16" y="29" width="46" height="34" fill="#2c2d30"/><path d="M24 34H32M24 37H48" stroke="#ccc" stroke-width="2"/><rect x="26" y="42" width="12" height="10" fill="#e6e6e6"/><rect x="28" y="43.500" width="8" height="6" fill="#1d5277"/><rect x="40" y="42" width="13" height="10" fill="#1b86bf"/><path d="M24 56H34" stroke="#b22" stroke-width="1.500"/><path d="M6 32H14M6 37H13M6 42H14M6 47H12" stroke="#c9c9cc" stroke-width="1.300"/>'+`<g transform="translate(45 46) scale(.38)">${finder}</g>`,
t2:'<rect x="4" y="24" width="68" height="40" fill="#e6ecf5"/><rect x="4" y="24" width="68" height="4" fill="#c3ccd8"/><path d="M6 32H55M6 36H55M6 40H55" stroke="#fff" stroke-width="3"/><path d="M10 32H50M10 36H46M10 40H50" stroke="#a5b0bd" stroke-width="1"/><path d="M20 26H24" stroke="#2a7de0" stroke-width="3"/><path d="M58 32H62M58 36H62" stroke="#667" stroke-width="1.500"/>'+`<g transform="translate(44.500 47.500) scale(.38)">${rocket.replaceAll('rk','rk2')}</g>`,
t3:'<rect x="4" y="25" width="68" height="38" fill="#fafafb"/><path d="M4 27H72" stroke="#dcdde0" stroke-width="3"/><path d="M7 32H13M7 36H12M10 41H16M10 46H15M10 51H16" stroke="#dab9b9" stroke-width="1"/><path d="M28 36H60M28 41H48M28 45H56M28 50H42M28 55H46" stroke="#c3c0e4" stroke-width="1"/><rect x="63" y="34" width="6" height="3" fill="#1a73e8"/>'+`<g transform="translate(45 46) scale(.38)">${postman}</g>`,
t4:'<rect x="4" y="25" width="68" height="38" fill="#fbfbfb"/><rect x="4" y="25" width="7" height="38" fill="#e6e3e5"/><path d="M11 27H72" stroke="#dcdde0" stroke-width="3"/><path d="M14 32H69M14 38H69M14 44H69M14 50H69M14 56H26" stroke="#dadce0" stroke-width="3.500" stroke-dasharray="3.500 3"/><path d="M27 32h3" stroke="#345" stroke-width="3"/><path d="M33 32h3" stroke="#3ab0e8" stroke-width="3"/>'+`<g transform="translate(45 46) scale(.38)">${finder}</g>`,
trash:'<path d="M12 17 18 70Q19 76 38 76T58 70L64 17Z" fill="url(#tr)"/><ellipse cx="38" cy="18" rx="25.500" ry="5" fill="#c7b3b8" stroke="#f0eef0" stroke-width="1.500"/>'
};
define('dock-icon',':host{display:block;height:94px;flex:1 1 0;font-family:Inter,sans-serif}svg{margin:auto;filter:drop-shadow(0 1.500px 1.500px #0005)}:host([run])::after{content:"";display:block;width:8px;height:8px;border-radius:50%;background:#160a10;margin:-12px auto 0}',e=>`<svg width="76" height="94" viewBox="0 0 76 94" fill="none"><defs>${lg('fl','#2fd0fb','#1f6ff0')+lg('fr','#f6f6f8','#cfd9e6')+lg('sf','#2da4f2','#1d6fe0')+lg('ml','#2572f0','#2cc0fa')+lg('gr','#5df777','#27c13f')+lg('mu','#fb5c74','#fa233b')+lg('pd','#c663ec','#7a2fbc')+lg('tv','#25332f','#0b0d0e')+lg('as','#25c0f6','#1c62e6')+lg('my','#2d6593','#173c58')+lg('tr','#e9e6e8','#d8cdd1')}</defs>${A[e.getAttribute('name')]}</svg>`);
define('mac-dock',`:host{display:flex;align-items:center;width:2443px;height:94px;border-radius:26px;background:linear-gradient(90deg,#c59b85,#9c8f8a 8%,#7b8f9c 17%,#788ba0 25%,#8a8690 34%,#a07d78 40%,#87808c 44%,#6fa9b6 49%,#7790a8 52%,#867c90 57%,#8e7186 64%,#96708a 74%,#a86670 83%,#a06a78 90%,#b4868e);box-shadow:inset 0 0 0 1.500px #ffffff40,0 0 2px #0006}
.g{display:flex;flex:none}.s{width:2px;height:70px;background:#5a3a50;flex:none}`,()=>{
 const g=(names,ml,w)=>`<div class="g" style="margin-left:${ml}px;width:${w}px">${names.map(n=>`<dock-icon name="${n.replace('*','')}" ${n.endsWith('*')?'run':''}></dock-icon>`).join('')}</div>`;
 return g(['finder*','launch','safari','mail','face','msg','maps','photos','contacts','cal','rem','notes','music*','pod','tv','app','set','zip'],5,1372)+'<div class="s" style="margin-left:18px"></div>'+g(['term*','mysql*','postman*','chrome*','wps*','rocket*','ms*'],14,534)+'<div class="s" style="margin-left:18px"></div>'+g(['folder','t1','t2','t3','t4','trash'],14,459)});

define('mac-desktop',`:host{display:flex;flex-direction:column;width:2560px;height:1600px;position:relative;overflow:hidden;gap:2px}
desk-wallpaper,.bk{position:absolute;left:0;top:0}.bk{left:43px;top:1420px;width:2475px;height:56px;background:#9b9d9e;border-radius:0 0 18px 18px;overflow:hidden}
.bk i{position:absolute;left:1682px;bottom:2px;width:46px;height:30px;border-radius:6px;background:#8a8c90}
mac-menubar,browser-window,mac-dock{position:relative;flex:none}mac-dock{margin:28px 0 0 59px}mac-notification{position:absolute;left:1839px;top:81px;z-index:5}`,`
<desk-wallpaper></desk-wallpaper><div class="bk"><i></i></div><mac-menubar></mac-menubar><browser-window></browser-window><mac-dock></mac-dock><mac-notification></mac-notification>`);
fits.forEach(f=>f.fit());
</script>
</body>
</html>
